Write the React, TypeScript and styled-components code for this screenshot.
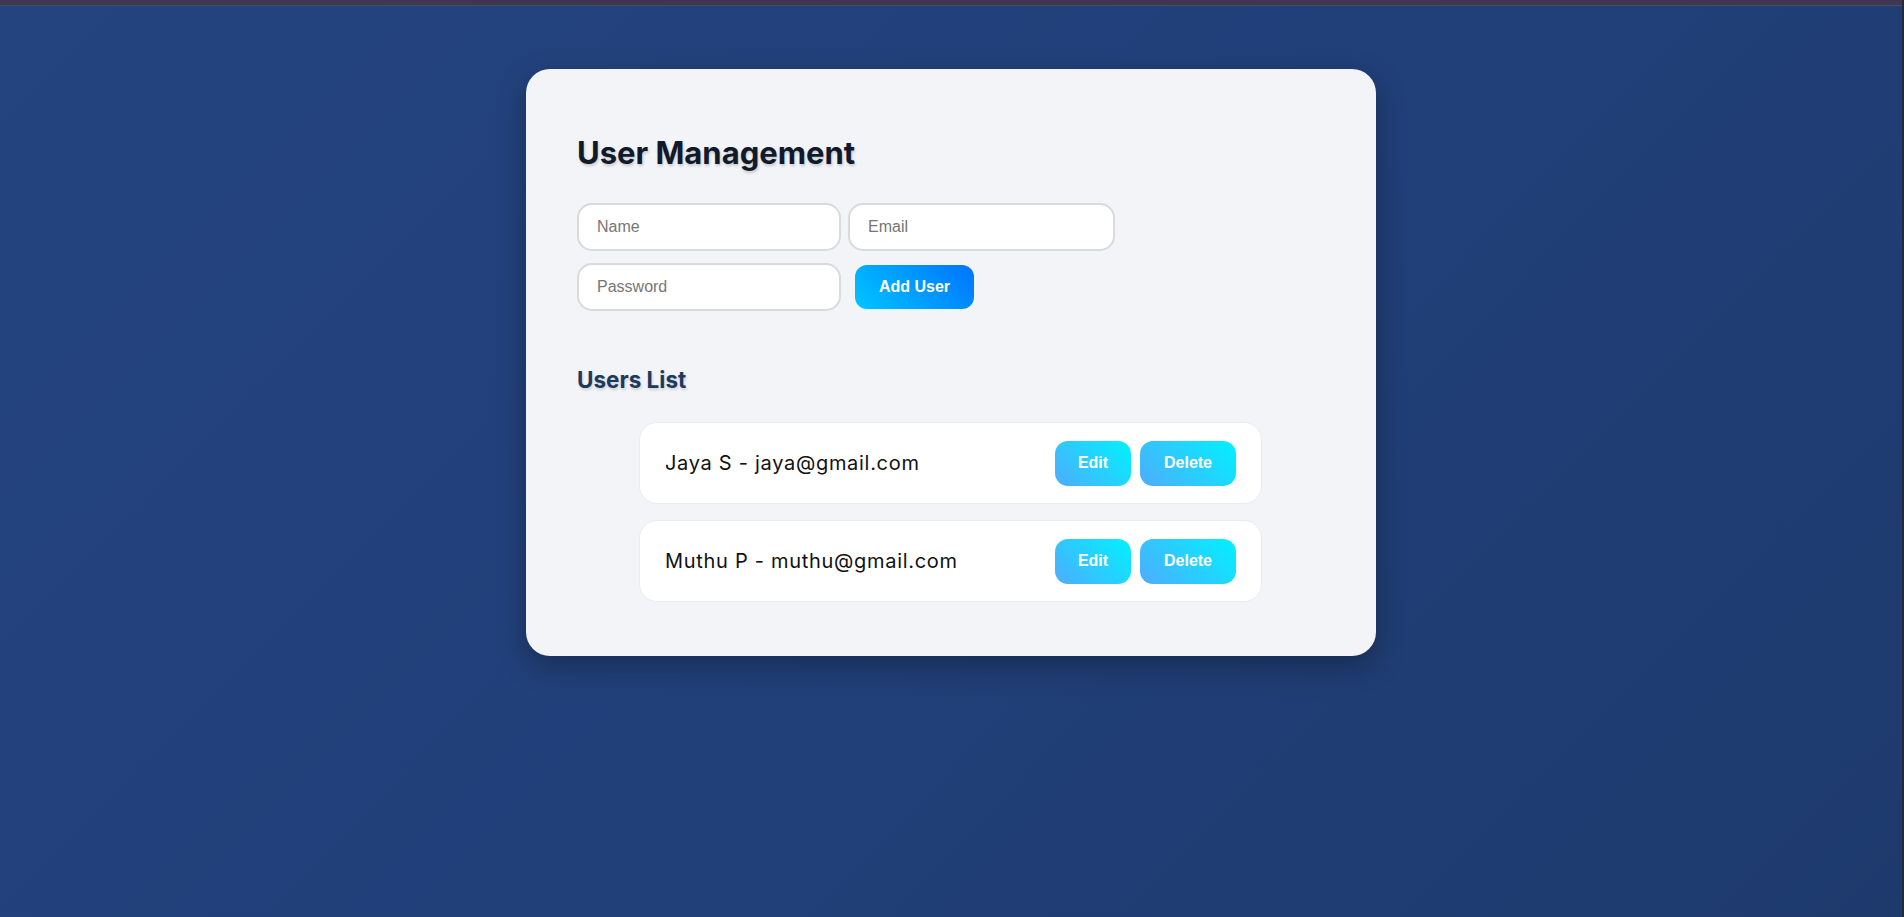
import React, { useState } from 'react'
import styled, { createGlobalStyle } from 'styled-components'

const Global = createGlobalStyle`
  html, body {
    margin: 0;
    padding: 0;
  }
  body {
    font-family: Inter, "Noto Sans", sans-serif;
    background: #21407a;
  }
  * { box-sizing: border-box; }
`

const Page = styled.div`
  min-height: 917px;
  background: linear-gradient(135deg, #24447f 0%, #21407a 50%, #1e3a6d 100%);
  border-right: 2px solid #262a33;
`

const TopStrip = styled.div`
  height: 6px;
  background: #3f3651;
  border-bottom: 1px solid #4b4c60;
`

const Card = styled.div`
  width: 850px;
  margin: 63px auto 0;
  background: #f3f4f7;
  border-radius: 24px;
  padding: 64px 51px 54px;
  box-shadow: 0 10px 30px rgba(0, 0, 0, 0.3);
`

const Title = styled.h2`
  margin: 0 0 30px;
  font-family: Inter, "Noto Sans", sans-serif;
  font-size: 31px;
  font-weight: 700;
  line-height: 40px;
  color: #101a2b;
  text-shadow: 1px 2px 3px rgba(0, 0, 0, 0.18);
`

const Form = styled.div`
  display: flex;
  flex-wrap: wrap;
  align-items: center;
  width: 548px;
  gap: 12px 7px;
`

const Input = styled.input<{ $w?: number }>`
  width: ${p => p.$w ?? 264}px;
  height: 48px;
  padding: 0 18px;
  border: 2px solid #dadada;
  border-radius: 15px;
  background: #fff;
  font-family: "Liberation Sans", Arial, sans-serif;
  font-size: 16px;
  color: #222;
  outline: none;
  &::placeholder { color: #767676; }
`

const AddButton = styled.button`
  margin-left: 7px;
  width: 119px;
  height: 44px;
  border: none;
  border-radius: 12px;
  background: linear-gradient(45deg, #00c6ff, #0072ff);
  color: #fff;
  font-family: "Liberation Sans", Arial, sans-serif;
  font-size: 16px;
  font-weight: 700;
  cursor: pointer;
`

const SubTitle = styled.h3`
  margin: 54px 0 27px;
  font-family: Inter, "Noto Sans", sans-serif;
  font-size: 22.5px;
  font-weight: 700;
  line-height: 30px;
  color: #1c3a5e;
  text-shadow: 1px 2px 3px rgba(0, 0, 0, 0.15);
`

const List = styled.ul`
  list-style: none;
  margin: 0 0 0 62px;
  padding: 0;
  width: 623px;
  display: flex;
  flex-direction: column;
  gap: 16px;
`

const Item = styled.li`
  display: flex;
  align-items: center;
  justify-content: space-between;
  height: 82px;
  padding: 0 25px;
  background: #fff;
  border: 1px solid #ececef;
  border-radius: 18px;
`

const ItemText = styled.span`
  font-family: Inter, "Noto Sans", sans-serif;
  font-size: 20px;
  letter-spacing: 0.7px;
  color: #111;
`

const Actions = styled.div`
  display: flex;
  gap: 9px;
`

const ActionButton = styled.button<{ $w: number }>`
  width: ${p => p.$w}px;
  height: 45px;
  border: none;
  border-radius: 13px;
  background: linear-gradient(45deg, #4facfe, #00f2fe);
  color: #fff;
  font-family: "Liberation Sans", Arial, sans-serif;
  font-size: 16px;
  font-weight: 700;
  cursor: pointer;
`

type User = { name: string, email: string }

export default function App() {
  const [users] = useState<User[]>([
    { name: 'Jaya S', email: 'jaya@gmail.com' },
    { name: 'Muthu P', email: 'muthu@gmail.com' },
  ])
  return (
    <Page>
      <Global />
      <TopStrip />
      <Card>
        <Title>User Management</Title>
        <Form>
          <Input placeholder="Name" />
          <Input placeholder="Email" $w={267} />
          <Input placeholder="Password" type="password" />
          <AddButton>Add User</AddButton>
        </Form>
        <SubTitle>Users List</SubTitle>
        <List>
          {users.map((u, i) => (
            <Item key={i}>
              <ItemText>{u.name} - {u.email}</ItemText>
              <Actions>
                <ActionButton $w={76}>Edit</ActionButton>
                <ActionButton $w={96}>Delete</ActionButton>
              </Actions>
            </Item>
          ))}
        </List>
      </Card>
    </Page>
  )
}
